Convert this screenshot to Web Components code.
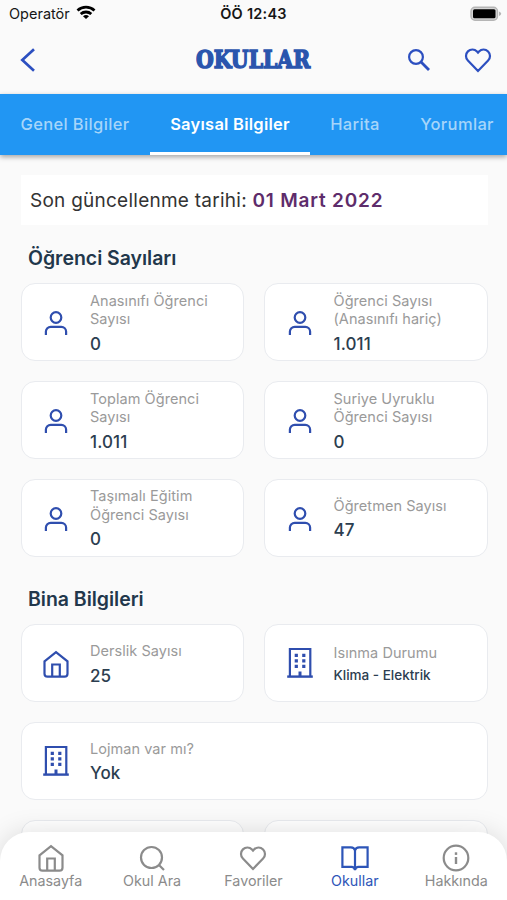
<!DOCTYPE html>
<html lang="tr">
<head>
<meta charset="utf-8">
<title>Okullar</title>
<style>
  body {
    margin: 0;
    font-family: Inter, "Liberation Sans", sans-serif;
    background: #fafafa;
  }
</style>
</head>
<body>
<school-page></school-page>

<script>
const ICONS = {
  user: `<circle cx="14" cy="8.5" r="5.3"/><path d="M3.900 26v-3.400a4.800 4.800 0 0 1 4.800-4.800h10.600a4.800 4.800 0 0 1 4.800 4.800V26"/>`,
  home: `<path d="M2.500 11.300 14 2.200l11.500 9.100v12.400a3 3 0 0 1-3 3h-17a3 3 0 0 1-3-3z"/><path d="M10.200 26.500V14.500h7.600v12"/>`,
  building: `<path d="M3.900 26V-1h20.400v27"/><path d="M1.200 26.600h25.600" stroke-width="2.400"/><path d="M14 26v-4.500" stroke-width="3"/><path d="M8.700 5.300h3.200M16.200 5.300h3.200M8.700 10.800h3.200M16.200 10.800h3.200M8.700 16.300h3.200M16.200 16.300h3.200" stroke-width="3.200"/>`,
  search: `<circle cx="13.500" cy="13.500" r="10.500"/><path d="m21.200 21.200 4.800 4.800"/>`,
  find: `<circle cx="11" cy="11" r="6.900" stroke-width="2.200"/><path d="m15.800 15.800 8.200 8.200" stroke-width="2.800"/>`,
  heart: `<path d="M14 25 3.900 14.500a6.400 6.400 0 0 1 0-9.100 6.400 6.400 0 0 1 9.100 0l1 1.100 1-1.100a6.400 6.400 0 0 1 9.100 0 6.400 6.400 0 0 1 0 9.100z"/>`,
  book: `<path d="M14 6.500Q13.300 3.400 9.800 3.400H1.400v19.400h9.200Q13.200 22.800 14 26q.8-3.200 3.400-3.200h9.200V3.400h-8.400Q14.700 3.400 14 6.500V25"/>`,
  info: `<circle cx="14" cy="14" r="12.300"/><path d="M14 13v7" stroke-width="2.400"/><path d="M14 8.300v2.600" stroke-width="2.400"/>`,
  back: `<path d="M20 3.200 8.300 14 20 24.800" stroke-width="2.700"/>`
};

class AppIcon extends HTMLElement {
  constructor() {
    super();
    this.attachShadow({ mode: "open" });
  }

  connectedCallback() {
    this.shadowRoot.innerHTML = `
      <style>
        :host { display: block; width: 28px; height: 28px; flex: none; }
        svg {
          display: block;
          width: 100%;
          height: 100%;
          overflow: visible;
          fill: none;
          stroke: currentColor;
          stroke-width: 2.200;
        }
      </style>
      <svg viewBox="0 0 28 28">${ICONS[this.getAttribute("name")]}</svg>
    `;
  }
}

class StatusBar extends HTMLElement {
  constructor() {
    super();
    this.attachShadow({ mode: "open" });
  }

  connectedCallback() {
    this.shadowRoot.innerHTML = `
      <style>
        :host {
          display: grid;
          grid-template-columns: 1fr auto 1fr;
          align-items: center;
          height: 28px;
          padding: 0 5px 0 9px;
          box-sizing: border-box;
          color: #161616;
          font-size: 14.500px;
        }
        .left { display: flex; align-items: center; gap: 6px; margin-top: -1px; }
        .left svg { margin-top: -2px; }
        .time { font-weight: 600; margin-left: -4px; margin-top: -1px; letter-spacing: 0.25px; }
        svg { display: block; }
        .battery { justify-self: end; margin-top: -1px; }
      </style>
      <div class="left">
        <span>Operatör</span>
        <svg width="20" height="15" viewBox="0 0 20 15" fill="none" stroke="#000" stroke-width="2.800">
          <path d="M1.500 5.500a12.500 12.500 0 0 1 17 0"/>
          <path d="M4.700 9a8 8 0 0 1 10.600 0"/>
          <path d="m10 14-3-2.800a4.600 4.600 0 0 1 6 0z" fill="#000" stroke="none"/>
        </svg>
      </div>
      <span class="time">ÖÖ 12:43</span>
      <svg class="battery" width="32" height="16" viewBox="0 0 32 16">
        <rect x="1" y="1.200" width="26.500" height="13" rx="4" fill="#d5d5d5" stroke="#b5b5b5" stroke-width="1.400"/>
        <rect x="3" y="3.200" width="22.500" height="9" rx="1.500" fill="#000"/>
        <path d="M29 5.500q2.200 1 2.200 2.200T29 10z" fill="#b5b5b5"/>
      </svg>
    `;
  }
}

class AppHeader extends HTMLElement {
  constructor() {
    super();
    this.attachShadow({ mode: "open" });
  }

  connectedCallback() {
    this.shadowRoot.innerHTML = `
      <style>
        :host {
          display: grid;
          grid-template-columns: 1fr auto 1fr;
          align-items: center;
          height: 66px;
          padding: 0 15px 3px 14px;
          box-sizing: border-box;
          color: #2c4fc0;
        }
        h1 {
          margin: 0;
          padding-top: 1px;
          width: 118px;
          display: flex;
          justify-content: center;
          font: bold 24px/30px "DejaVu Serif", serif;
          color: #2a55ad;
        }
        h1 span { transform: scaleX(0.85); -webkit-text-stroke: 1.500px #2a55ad; }
        .actions { display: flex; gap: 31px; justify-content: flex-end; }
      </style>
      <app-icon name="back"></app-icon>
      <h1><span><slot></slot></span></h1>
      <div class="actions">
        <app-icon name="find"></app-icon>
        <app-icon name="heart"></app-icon>
      </div>
    `;
  }
}

class TabBar extends HTMLElement {
  constructor() {
    super();
    this.attachShadow({ mode: "open" });
  }

  connectedCallback() {
    this.shadowRoot.innerHTML = `
      <style>
        :host {
          display: flex;
          height: 61px;
          background: #2196f3;
          box-shadow: 0 2px 5px rgba(0, 0, 0, 0.35);
        }
      </style>
      <slot></slot>
    `;
  }
}

class TabItem extends HTMLElement {
  constructor() {
    super();
    this.attachShadow({ mode: "open" });
  }

  connectedCallback() {
    this.shadowRoot.innerHTML = `
      <style>
        :host {
          display: flex;
          align-items: center;
          justify-content: center;
          flex: none;
          box-sizing: border-box;
          padding-top: 1px;
          border-bottom: 3px solid transparent;
          color: #a6d5fa;
          font-size: 16.500px;
          font-weight: 500;
          letter-spacing: 0.35px;
          white-space: nowrap;
        }
        :host([active]) { color: #fff; font-weight: 600; letter-spacing: 0.25px; border-color: #fff; }
      </style>
      <slot></slot>
    `;
  }
}

class UpdateNotice extends HTMLElement {
  constructor() {
    super();
    this.attachShadow({ mode: "open" });
  }

  connectedCallback() {
    this.shadowRoot.innerHTML = `
      <style>
        :host {
          display: block;
          height: 50px;
          padding: 0 9.500px;
          box-sizing: border-box;
          background: #fff;
          color: #333;
          font-size: 19px;
          line-height: 51px;
          letter-spacing: 0.25px;
          white-space: nowrap;
        }
        b { color: #5e2c6b; font-weight: 600; letter-spacing: 0.8px; }
      </style>
      Son güncellenme tarihi: <b><slot></slot></b>
    `;
  }
}

class InfoSection extends HTMLElement {
  constructor() {
    super();
    this.attachShadow({ mode: "open" });
  }

  connectedCallback() {
    this.shadowRoot.innerHTML = `
      <style>
        :host { display: block; }
        h2 {
          margin: 0 0 10px 7.500px;
          padding-top: 1px;
          font-size: 19.500px;
          line-height: 30px;
          font-weight: 600;
          letter-spacing: -0.030px;
          color: #22374b;
        }
        .grid {
          display: grid;
          grid-template-columns: 1fr 1fr;
          grid-auto-rows: 78px;
          gap: 19.800px 20px;
        }
      </style>
      <h2>${this.getAttribute("heading")}</h2>
      <div class="grid"><slot></slot></div>
    `;
  }
}

class InfoCard extends HTMLElement {
  constructor() {
    super();
    this.attachShadow({ mode: "open" });
  }

  connectedCallback() {
    this.shadowRoot.innerHTML = `
      <style>
        :host {
          display: flex;
          align-items: center;
          gap: 20px;
          box-sizing: border-box;
          padding: 0 16px 0 20.500px;
          border: 1px solid #e9ebef;
          border-radius: 14px;
          background: #fff;
        }
        :host([wide]) { grid-column: span 2; }
        app-icon { color: #2f4eae; margin-top: 2px; }
        .text { padding-top: 4.500px; }
        .label {
          font-size: 14.500px;
          line-height: 18.500px;
          letter-spacing: 0.050px;
          color: #9a9a9a;
          white-space: pre-line;
        }
        .value {
          margin-top: 3px;
          font-size: 17px;
          line-height: 25px;
          font-weight: 500;
          letter-spacing: 0.1px;
          color: #2c3e50;
        }
        :host([small]) .value { margin-top: 2px; font-size: 13.500px; line-height: 23px; letter-spacing: 0; }
      </style>
      <app-icon name="${this.getAttribute("icon")}"></app-icon>
      <div class="text">
        <div class="label">${this.getAttribute("label")}</div>
        <div class="value"><slot></slot></div>
      </div>
    `;
  }
}

class BottomNav extends HTMLElement {
  constructor() {
    super();
    this.attachShadow({ mode: "open" });
  }

  connectedCallback() {
    this.shadowRoot.innerHTML = `
      <style>
        :host {
          display: grid;
          grid-template-columns: repeat(5, 1fr);
          height: 68px;
          box-sizing: border-box;
          padding-top: 12px;
          background: #fff;
          border-radius: 29px 29px 0 0;
          box-shadow: 0 0 26px rgba(0, 0, 0, 0.13);
        }
      </style>
      <slot></slot>
    `;
  }
}

class NavItem extends HTMLElement {
  constructor() {
    super();
    this.attachShadow({ mode: "open" });
  }

  connectedCallback() {
    this.shadowRoot.innerHTML = `
      <style>
        :host {
          display: flex;
          flex-direction: column;
          align-items: center;
          color: #8b8b8b;
          font-size: 14.300px;
          line-height: 18px;
          white-space: nowrap;
        }
        :host([active]) { color: #2d55b8; }
      </style>
      <app-icon name="${this.getAttribute("icon")}"></app-icon>
      <span><slot></slot></span>
    `;
  }
}

class SchoolPage extends HTMLElement {
  constructor() {
    super();
    this.attachShadow({ mode: "open" });
  }

  connectedCallback() {
    this.shadowRoot.innerHTML = `
      <style>
        :host {
          display: block;
          position: relative;
          width: 507px;
          height: 900px;
          overflow: hidden;
        }
        main {
          display: flex;
          flex-direction: column;
          gap: 26.500px;
          padding: 20px 19.500px 0 20.500px;
        }
        update-notice { margin-bottom: -9.500px; }
        bottom-nav { position: absolute; left: 0; right: 0; bottom: 0; }
      </style>
      <status-bar></status-bar>
      <app-header>OKULLAR</app-header>
      <tab-bar>
        <tab-item style="width: 150px">Genel Bilgiler</tab-item>
        <tab-item style="width: 160px" active>Sayısal Bilgiler</tab-item>
        <tab-item style="width: 90px">Harita</tab-item>
        <tab-item style="width: 114px">Yorumlar</tab-item>
      </tab-bar>
      <main>
        <update-notice>01 Mart 2022</update-notice>
        <info-section heading="Öğrenci Sayıları">
          <info-card icon="user" label="Anasınıfı Öğrenci\nSayısı">0</info-card>
          <info-card icon="user" label="Öğrenci Sayısı\n(Anasınıfı hariç)">1.011</info-card>
          <info-card icon="user" label="Toplam Öğrenci\nSayısı">1.011</info-card>
          <info-card icon="user" label="Suriye Uyruklu\nÖğrenci Sayısı">0</info-card>
          <info-card icon="user" label="Taşımalı Eğitim\nÖğrenci Sayısı">0</info-card>
          <info-card icon="user" label="Öğretmen Sayısı">47</info-card>
        </info-section>
        <info-section heading="Bina Bilgileri">
          <info-card icon="home" label="Derslik Sayısı">25</info-card>
          <info-card icon="building" label="Isınma Durumu" small>Klima - Elektrik</info-card>
          <info-card icon="building" label="Lojman var mı?" wide>Yok</info-card>
          <info-card icon="home" label=""></info-card>
          <info-card icon="home" label=""></info-card>
        </info-section>
      </main>
      <bottom-nav>
        <nav-item icon="home">Anasayfa</nav-item>
        <nav-item icon="search">Okul Ara</nav-item>
        <nav-item icon="heart">Favoriler</nav-item>
        <nav-item icon="book" active>Okullar</nav-item>
        <nav-item icon="info">Hakkında</nav-item>
      </bottom-nav>
    `;
  }
}

customElements.define("app-icon", AppIcon);
customElements.define("status-bar", StatusBar);
customElements.define("app-header", AppHeader);
customElements.define("tab-bar", TabBar);
customElements.define("tab-item", TabItem);
customElements.define("update-notice", UpdateNotice);
customElements.define("info-section", InfoSection);
customElements.define("info-card", InfoCard);
customElements.define("bottom-nav", BottomNav);
customElements.define("nav-item", NavItem);
customElements.define("school-page", SchoolPage);
</script>
</body>
</html>
